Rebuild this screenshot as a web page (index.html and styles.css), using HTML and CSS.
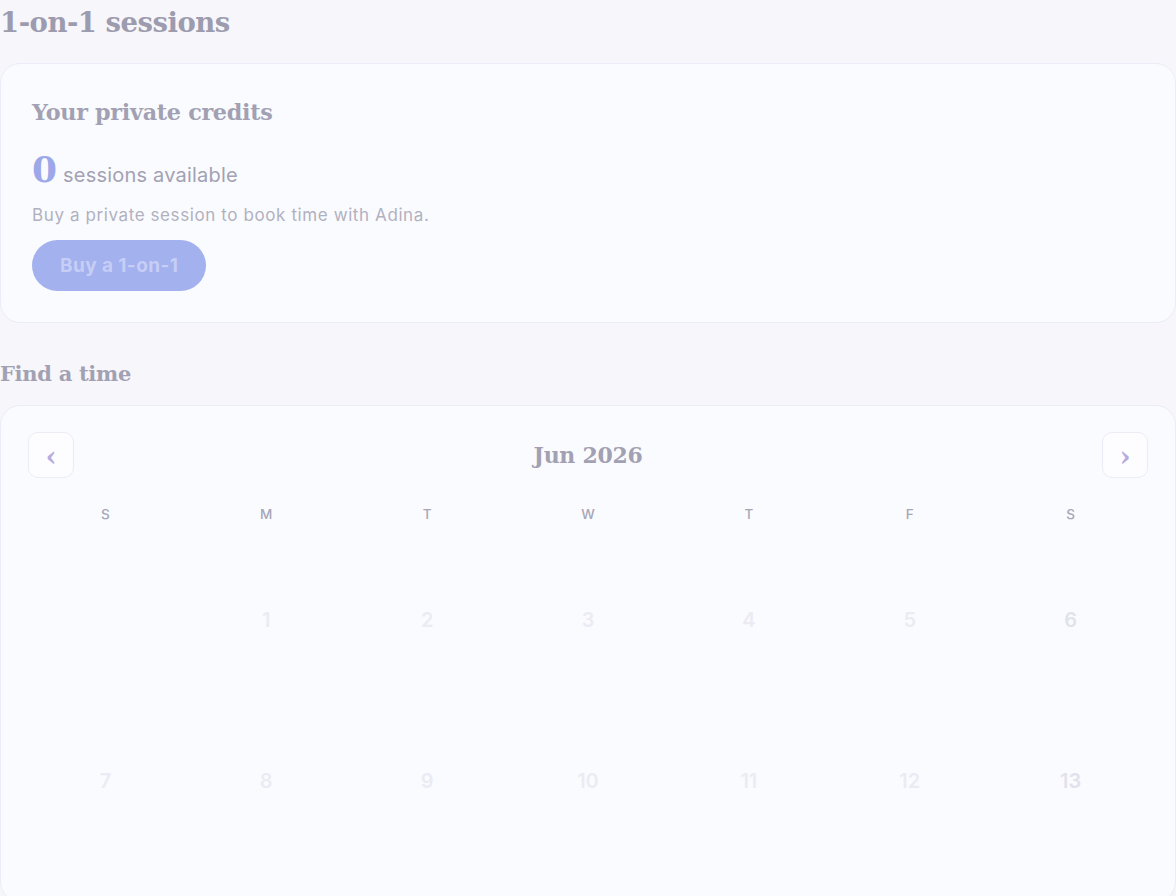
FILE: index.html
```html
<!DOCTYPE html>
<html>
<head>
<meta charset="utf-8">
<link rel="stylesheet" href="styles.css">
</head>
<body>
<main class="page">
  <h1 class="page-title">1-on-1 sessions</h1>
  <section class="card credits">
    <h2 class="card-title">Your private credits</h2>
    <div class="count"><span class="count-num">0</span><span class="count-label">sessions available</span></div>
    <p class="hint">Buy a private session to book time with Adina.</p>
    <button class="buy">Buy a 1-on-1</button>
  </section>
  <h2 class="section-title">Find a time</h2>
  <section class="card calendar">
    <div class="cal-head">
      <button class="nav">&#8249;</button>
      <div class="month">Jun 2026</div>
      <button class="nav">&#8250;</button>
    </div>
    <div class="weekdays">
      <span>S</span><span>M</span><span>T</span><span>W</span><span>T</span><span>F</span><span>S</span>
    </div>
    <div class="days">
      <span class="day empty"></span>
      <span class="day">1</span><span class="day">2</span><span class="day">3</span><span class="day">4</span><span class="day">5</span><span class="day sat">6</span>
      <span class="day">7</span><span class="day">8</span><span class="day">9</span><span class="day">10</span><span class="day">11</span><span class="day">12</span><span class="day sat">13</span>
    </div>
  </section>
</main>
</body>
</html>
```
FILE: styles.css
```css
html, body {
  margin: 0;
  padding: 0;
  background: #f6f6fb;
}
body {
  font-family: Inter, "Noto Sans", sans-serif;
  color: #a2a2b3;
  overflow: hidden;
}
.page {
  display: flex;
  flex-direction: column;
}
.page-title {
  margin: 0;
  font-family: "DejaVu Serif", serif;
  font-weight: bold;
  font-size: 27.5px;
  line-height: 44px;
  color: #9d9caf;
  letter-spacing: -0.5px;
  margin-bottom: 19px;
}
.card {
  background: #fafbfe;
  border: 1px solid #ececf6;
  border-radius: 20px;
}
.credits {
  padding: 32px 31px 31px;
  display: flex;
  flex-direction: column;
  align-items: flex-start;
}
.card-title {
  margin: 0;
  font-family: "DejaVu Serif", serif;
  font-weight: bold;
  font-size: 22.3px;
  line-height: 32px;
  color: #a2a1b3;
  letter-spacing: -0.3px;
}
.count {
  display: flex;
  align-items: baseline;
  gap: 6px;
  margin-top: 21px;
  line-height: 40px;
}
.count-num {
  font-family: "DejaVu Serif", serif;
  font-weight: bold;
  font-size: 36px;
  color: #9ca8e8;
}
.count-label {
  font-size: 20px;
  color: #a2a2b3;
  letter-spacing: 0.2px;
}
.hint {
  margin: 8px 0 0;
  font-size: 17px;
  line-height: 24px;
  color: #b1b1c0;
  letter-spacing: 0.6px;
}
.buy {
  margin-top: 13px;
  height: 51px;
  padding: 0 28px;
  border: none;
  border-radius: 26px;
  background: #a3b1ee;
  color: #c6cef6;
  font-family: Inter, sans-serif;
  font-weight: bold;
  font-size: 19px;
  letter-spacing: 0.4px;
}
.section-title {
  margin: 37px 0 17px;
  font-family: "DejaVu Serif", serif;
  font-weight: bold;
  font-size: 21px;
  line-height: 28px;
  color: #a2a1b3;
  letter-spacing: -0.3px;
}
.calendar {
  padding: 26px 24px 40px 24px;
}
.cal-head {
  display: flex;
  align-items: center;
  justify-content: space-between;
  padding: 0 3px;
}
.nav {
  width: 46px;
  height: 46px;
  border: 1px solid #ececf6;
  border-radius: 10px;
  background: #fdfdff;
  color: #b6acdf;
  font-size: 28px;
  font-weight: bold;
  line-height: 1;
  padding: 4px 0 0;
  font-family: "DejaVu Serif", serif;
}
.month {
  font-family: "DejaVu Serif", serif;
  font-weight: bold;
  font-size: 22px;
  color: #a2a1b3;
  letter-spacing: -0.3px;
}
.weekdays {
  display: grid;
  grid-template-columns: repeat(7, 1fr);
  margin-top: 23px;
  line-height: 26px;
  font-size: 13.5px;
  font-weight: 500;
  color: #a6a6b6;
  text-align: center;
}
.days {
  display: grid;
  grid-template-columns: repeat(7, 1fr);
  grid-auto-rows: 161px;
  margin-top: 12px;
}
.day {
  display: flex;
  align-items: center;
  justify-content: center;
  font-size: 20px;
  font-weight: 600;
  color: #ebebf4;
}
.day.sat {
  color: #e2e2ec;
}
```
